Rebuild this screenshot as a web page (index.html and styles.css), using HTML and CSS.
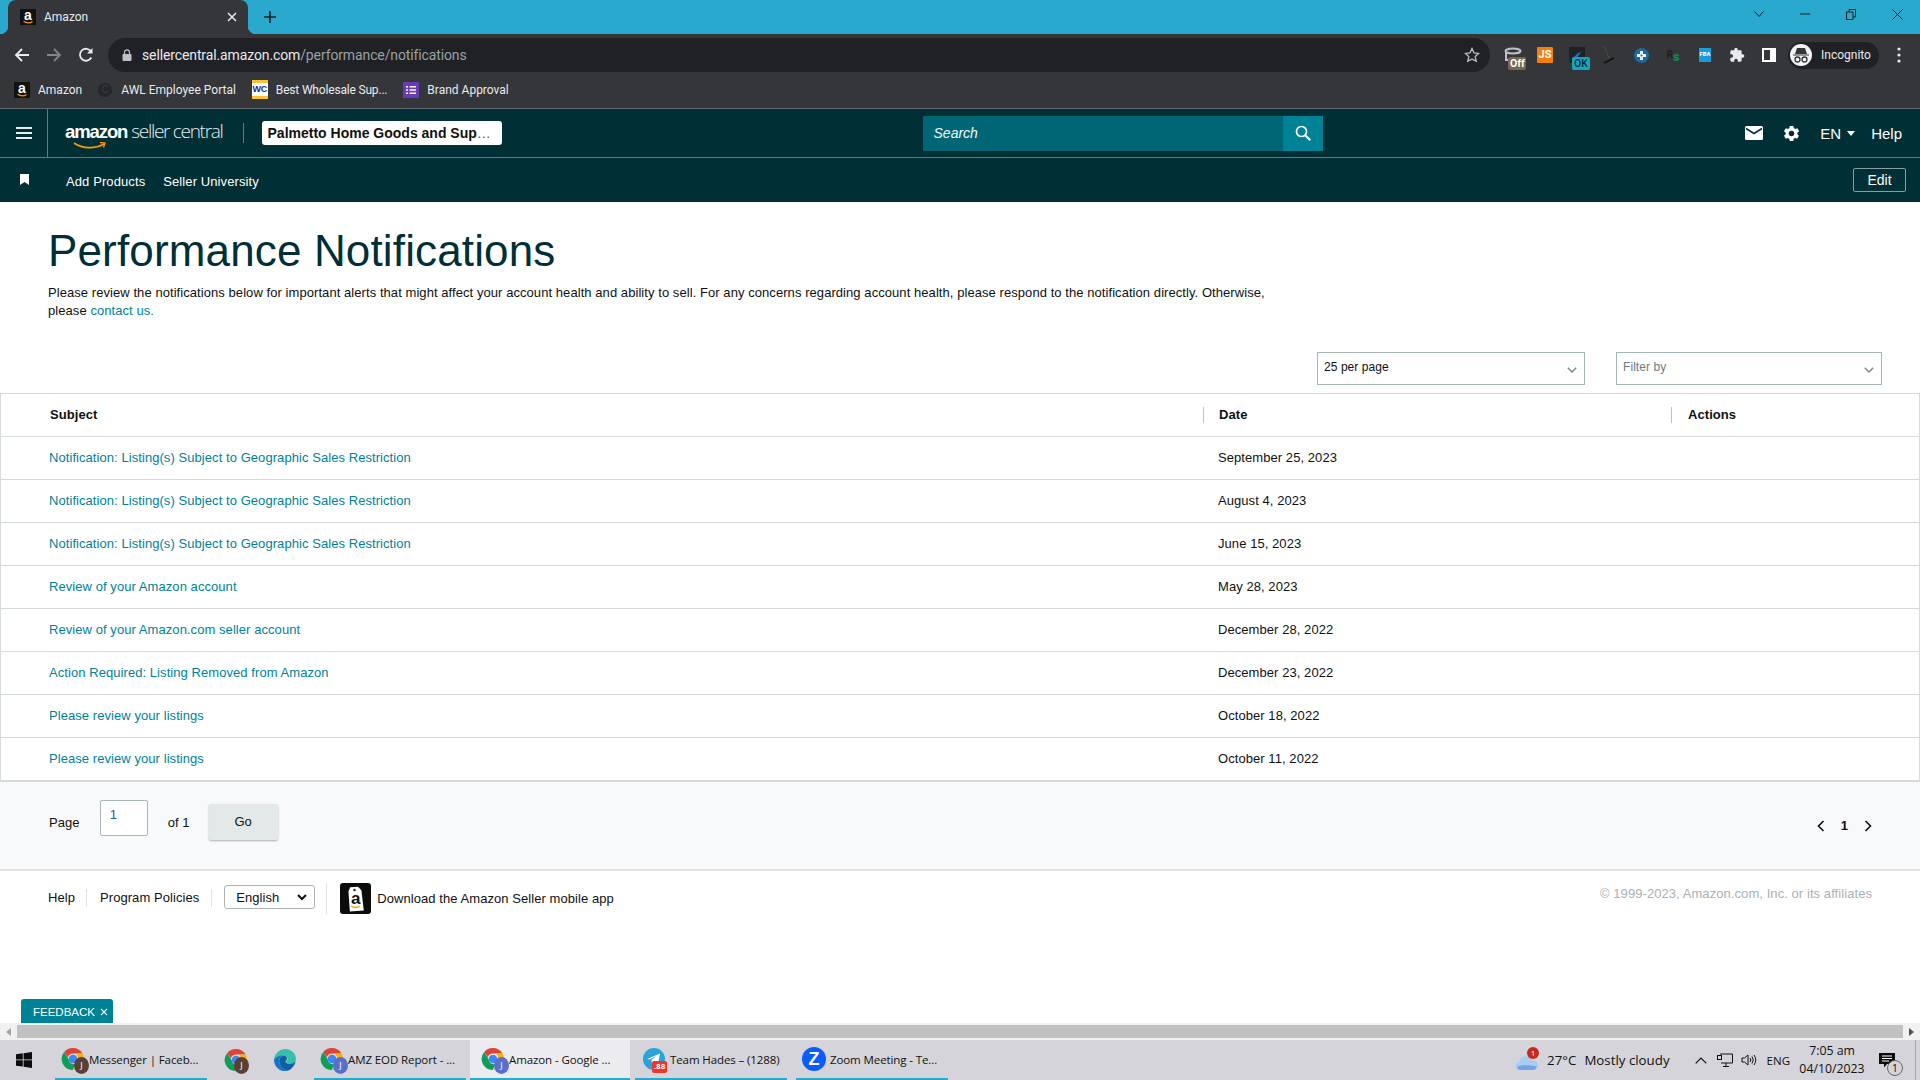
FILE: index.html
```html
<!DOCTYPE html>
<html lang="en">
<head>
<meta charset="utf-8">
<title>Amazon</title>
<link rel="stylesheet" href="styles.css">
</head>
<body>
<svg class="defs" width="0" height="0" aria-hidden="true">
  <symbol id="chrome" viewBox="0 0 24 24">
    <path fill="#db4437" d="M12 1a11 11 0 0 1 9.500 5.500H12a5.500 5.500 0 0 0-5.200 3.700L3.200 5A11 11 0 0 1 12 1z"/>
    <path fill="#f4b400" d="M21.500 6.500A11 11 0 0 1 12.700 23l4-6.700A5.500 5.500 0 0 0 16.400 8.700 5.500 5.500 0 0 0 15 6.500z"/>
    <path fill="#0f9d58" d="M3.200 5l4.500 7.500a5.500 5.500 0 0 0 6.300 4.700L11.800 23A11 11 0 0 1 3.200 5z"/>
    <circle cx="12" cy="12" r="4.300" fill="#4285f4"/>
  </symbol>
  <symbol id="azfav" viewBox="0 0 16 16">
    <rect width="16" height="16" fill="#111"/>
    <path d="M3.500 12.300c3 1.900 6.500 1.900 9 .2" fill="none" stroke="#f90" stroke-width="1.300"/>
  </symbol>
</svg>

<div class="screen">
  <header class="browser">
    <div class="titlebar">
      <div class="tab">
        <span class="fav"><svg width="16" height="16"><use href="#azfav"/></svg><b>a</b></span>
        <span class="tab-name">Amazon</span>
        <svg class="tab-x" width="10" height="10" viewBox="0 0 10 10"><path d="M1 1l8 8M9 1l-8 8" stroke="#e8eaed" stroke-width="1.500"/></svg>
      </div>
      <svg class="tab-new" width="12" height="12" viewBox="0 0 12 12"><path d="M6 0v12M0 6h12" stroke="#202124" stroke-width="1.600"/></svg>
      <div class="winctl">
        <span class="wc"><svg width="10" height="6" viewBox="0 0 10 6"><path d="M.5.500L5 5.500 9.500.500" fill="none" stroke="#202124"/></svg></span>
        <span class="wc"><svg width="10" height="2" viewBox="0 0 10 2"><path d="M0 1h10" stroke="#202124"/></svg></span>
        <span class="wc"><svg width="10" height="11" viewBox="0 0 10 11"><path d="M.5 3h6.500v7.500H.5zM3 3V.5h6.500V8H7" fill="none" stroke="#202124"/></svg></span>
        <span class="wc"><svg width="11" height="11" viewBox="0 0 11 11"><path d="M.5.500l10 10M10.500.500l-10 10" stroke="#202124"/></svg></span>
      </div>
    </div>
    <div class="toolbar">
      <span class="nav-ic"><svg width="16" height="16" viewBox="0 0 16 16"><path d="M15 8H2M8 2L2 8l6 6" fill="none" stroke="#e8eaed" stroke-width="1.800"/></svg></span>
      <span class="nav-ic"><svg width="16" height="16" viewBox="0 0 16 16"><path d="M1 8h13M8 2l6 6-6 6" fill="none" stroke="#80868b" stroke-width="1.800"/></svg></span>
      <span class="nav-ic"><svg width="16" height="16" viewBox="0 0 16 16"><path d="M13.300 10.500A6 6 0 1 1 13 4.500" fill="none" stroke="#e8eaed" stroke-width="1.800"/><path d="M14.500 1v5.500H9z" fill="#e8eaed"/></svg></span>
      <div class="omni">
        <svg class="lock" width="10" height="12" viewBox="0 0 10 12"><path d="M2.500 5V3.300a2.500 2.500 0 0 1 5 0V5" fill="none" stroke="#bdc1c6" stroke-width="1.200"/><rect y="5" width="9" height="7" x=".5" rx="1" fill="#bdc1c6"/></svg>
        <span class="url"><span class="url-host">sellercentral.amazon.com</span>/performance/notifications</span>
        <svg class="star" width="16" height="16" viewBox="0 0 16 16"><path d="M8 1.500l2 4.400 4.700.5-3.500 3.200 1 4.700L8 11.900l-4.200 2.400 1-4.700L1.300 6.400 6 5.900z" fill="none" stroke="#bdc1c6" stroke-width="1.300"/></svg>
      </div>
      <div class="exts">
        <span class="ext"><svg width="18" height="16" viewBox="0 0 18 16"><ellipse cx="9" cy="4" rx="7.500" ry="2.500" fill="none" stroke="#bdc1c6" stroke-width="2"/><path d="M2 5v8h6" fill="none" stroke="#bdc1c6" stroke-width="2"/></svg><i class="badge badge-off">Off</i></span>
        <span class="ext"><b class="ext-js">JS</b></span>
        <span class="ext"><span class="ext-dark"><svg width="16" height="10" viewBox="0 0 16 10"><path d="M3 9l6-6 3-1-4 6z" fill="#1a73c8"/></svg></span><i class="badge badge-ok">OK</i></span>
        <span class="ext"><svg width="12" height="20" viewBox="0 0 12 20"><path d="M1 1l5 12" stroke="#4a4b4f"/><path d="M1 18l10-5" stroke="#111" stroke-width="1.500"/></svg></span>
        <span class="ext"><svg width="15" height="15" viewBox="0 0 15 15"><circle cx="7.500" cy="7.500" r="7.500" fill="#1f6a9c"/><path d="M6 3h3v3h3v3H9v3H6V9H3V6h3z" fill="#e6f2fa"/><circle cx="7.500" cy="7.500" r="1" fill="#1f6a9c"/></svg></span>
        <span class="ext ext-rs"><b>R</b><b class="rs-s">s</b></span>
        <span class="ext"><b class="ext-fba">FBA</b></span>
        <span class="ext"><svg width="16" height="16" viewBox="0 0 24 24"><path fill="#e8eaed" d="M20.500 11H19V7a2 2 0 0 0-2-2h-4V3.500a2.500 2.500 0 0 0-5 0V5H4a2 2 0 0 0-2 2v3.800h1.500a2.700 2.700 0 0 1 0 5.400H2V20a2 2 0 0 0 2 2h3.800v-1.500a2.700 2.700 0 0 1 5.400 0V22H17a2 2 0 0 0 2-2v-4h1.500a2.500 2.500 0 0 0 0-5z"/></svg></span>
        <span class="ext"><span class="ext-panel"></span></span>
      </div>
      <div class="incog">
        <span class="incog-face"><svg width="18" height="18" viewBox="0 0 18 18"><path d="M3 8l2-6h8l2 6zM1 8.500h16v1H1z" fill="#35363a"/><circle cx="5.500" cy="13.500" r="2.500" fill="none" stroke="#35363a" stroke-width="1.300"/><circle cx="12.500" cy="13.500" r="2.500" fill="none" stroke="#35363a" stroke-width="1.300"/></svg></span>
        <span>Incognito</span>
      </div>
      <svg class="kebab" width="4" height="16" viewBox="0 0 4 16"><circle cx="2" cy="2" r="1.600" fill="#e8eaed"/><circle cx="2" cy="8" r="1.600" fill="#e8eaed"/><circle cx="2" cy="14" r="1.600" fill="#e8eaed"/></svg>
    </div>
    <div class="bookmarks">
      <span class="bm bm-1"><span class="fav"><svg width="16" height="16"><use href="#azfav"/></svg><b>a</b></span>Amazon</span>
      <span class="bm bm-2"><span class="bm-dot">C</span>AWL Employee Portal</span>
      <span class="bm bm-3"><span class="bm-wc">WC</span>Best Wholesale Sup...</span>
      <span class="bm bm-4"><svg width="16" height="16" viewBox="0 0 16 16"><rect width="16" height="16" fill="#673ab7"/><path d="M3 4h2v1.500H3zM6.500 4H13v1.500H6.500zM3 7.300h2v1.500H3zM6.500 7.300H13v1.500H6.500zM3 10.500h2V12H3zM6.500 10.500H13V12H6.500z" fill="#fff"/></svg>Brand Approval</span>
    </div>
  </header>

  <nav class="sc-top">
    <div class="burger-cell"><svg width="16" height="12" viewBox="0 0 16 12"><path d="M0 1h16M0 6h16M0 11h16" stroke="#e6ecec" stroke-width="1.800"/></svg></div>
    <div class="logo">
      <span class="logo-az">amazon<svg class="smile" width="34" height="8" viewBox="0 0 34 8"><path d="M1 1c9 6 21 6 30 1" fill="none" stroke="#f90" stroke-width="1.700"/><path d="M27 .5l5 .5-1.500 4.500" fill="none" stroke="#f90" stroke-width="1.300"/></svg></span>
      <span class="logo-sc">seller central</span>
    </div>
    <span class="logo-sep"></span>
    <button class="store">Palmetto Home Goods and Sup<span class="store-more">…</span></button>
    <div class="search">
      <span class="search-input">Search</span>
      <span class="search-btn"><svg width="16" height="16" viewBox="0 0 16 16"><circle cx="6.500" cy="6.500" r="5" fill="none" stroke="#fff" stroke-width="1.700"/><path d="M10.200 10.200L15.300 15.300" stroke="#fff" stroke-width="2"/></svg></span>
    </div>
    <div class="top-right">
      <svg class="ic-mail" width="18" height="14" viewBox="0 0 18 14"><rect width="18" height="14" rx="1.500" fill="#fff"/><path d="M1 2.500l8 5 8-5" fill="none" stroke="#002f36" stroke-width="1.500"/></svg>
      <svg class="ic-gear" width="19" height="19" viewBox="0 0 24 24"><path fill="#fff" fill-rule="evenodd" d="M19.400 13a7.500 7.500 0 0 0 0-2l2.300-1.700-2.300-4-2.600 1.100a7.500 7.500 0 0 0-1.800-1L14.300 2.500H9.700L9.300 5.400a7.500 7.500 0 0 0-1.800 1L4.800 5.300l-2.300 4L4.700 11a7.500 7.500 0 0 0 0 2l-2.200 1.700 2.300 4 2.700-1.100a7.500 7.500 0 0 0 1.800 1l.4 2.900h4.600l.4-2.900a7.500 7.500 0 0 0 1.800-1l2.600 1.100 2.300-4zM12 15.500a3.500 3.500 0 1 1 0-7 3.500 3.500 0 0 1 0 7z"/></svg>
      <span class="lang">EN<i class="caret"></i></span>
      <span class="top-help">Help</span>
    </div>
  </nav>
  <nav class="sc-sub">
    <svg class="ic-bm" width="9" height="11" viewBox="0 0 9 11"><path d="M0 0h9v11L4.500 8 0 11z" fill="#fff"/></svg>
    <span class="sub-link">Add Products</span>
    <span class="sub-link">Seller University</span>
    <button class="edit">Edit</button>
  </nav>

  <main class="page">
    <section class="intro">
      <h1>Performance Notifications</h1>
      <p><span>Please review the notifications below for important alerts that might affect your account health and ability to sell. For any concerns regarding account health, please respond to the notification directly. Otherwise,</span> <span>please</span> <a href="#">contact us.</a></p>
    </section>
    <div class="controls">
      <div class="dd"><span>25 per page</span><svg width="10" height="6" viewBox="0 0 10 6"><path d="M.8.800L5 5 9.200.800" fill="none" stroke="#7d8b8f" stroke-width="1.500"/></svg></div>
      <div class="dd dd-filter"><span>Filter by</span><svg width="10" height="6" viewBox="0 0 10 6"><path d="M.8.800L5 5 9.200.800" fill="none" stroke="#7d8b8f" stroke-width="1.500"/></svg></div>
    </div>
    <div class="table">
      <div class="row head">
        <div class="cell subj"><span class="th-plain">Subject</span></div>
        <div class="cell date"><span class="th-sep">Date</span></div>
        <div class="cell act"><span class="th-sep">Actions</span></div>
      </div>
      <div class="row"><div class="cell subj"><a href="#">Notification: Listing(s) Subject to Geographic Sales Restriction</a></div><div class="cell date">September 25, 2023</div><div class="cell act"></div></div>
      <div class="row"><div class="cell subj"><a href="#">Notification: Listing(s) Subject to Geographic Sales Restriction</a></div><div class="cell date">August 4, 2023</div><div class="cell act"></div></div>
      <div class="row"><div class="cell subj"><a href="#">Notification: Listing(s) Subject to Geographic Sales Restriction</a></div><div class="cell date">June 15, 2023</div><div class="cell act"></div></div>
      <div class="row"><div class="cell subj"><a href="#">Review of your Amazon account</a></div><div class="cell date">May 28, 2023</div><div class="cell act"></div></div>
      <div class="row"><div class="cell subj"><a href="#">Review of your Amazon.com seller account</a></div><div class="cell date">December 28, 2022</div><div class="cell act"></div></div>
      <div class="row"><div class="cell subj"><a href="#">Action Required: Listing Removed from Amazon</a></div><div class="cell date">December 23, 2022</div><div class="cell act"></div></div>
      <div class="row"><div class="cell subj"><a href="#">Please review your listings</a></div><div class="cell date">October 18, 2022</div><div class="cell act"></div></div>
      <div class="row"><div class="cell subj"><a href="#">Please review your listings</a></div><div class="cell date">October 11, 2022</div><div class="cell act"></div></div>
    </div>
    <div class="pager">
      <span class="pg-label">Page</span>
      <span class="pg-input">1</span>
      <span class="pg-of">of 1</span>
      <button class="pg-go">Go</button>
      <div class="pg-nav">
        <svg width="8" height="12" viewBox="0 0 8 12"><path d="M6.500 1L1.500 6l5 5" fill="none" stroke="#0f1111" stroke-width="1.600"/></svg>
        <b>1</b>
        <svg width="8" height="12" viewBox="0 0 8 12"><path d="M1.500 1l5 5-5 5" fill="none" stroke="#0f1111" stroke-width="1.600"/></svg>
      </div>
    </div>
    <footer class="foot">
      <span class="f-link f-help">Help</span>
      <span class="f-link f-pol">Program Policies</span>
      <span class="f-select">English<svg width="10" height="7" viewBox="0 0 10 7"><path d="M1 1l4 4 4-4" fill="none" stroke="#111" stroke-width="2"/></svg></span>
      <span class="f-app">
        <span class="f-appicon">
          <svg width="31" height="31" viewBox="0 0 31 31"><rect width="31" height="31" rx="3" fill="#0b0b0b"/><path d="M11 4h8l3 4 1 20-14 0 0-20z" fill="#fff" transform="rotate(-4 15 16)"/><circle cx="14.500" cy="7" r="1.300" fill="#333"/><path d="M11 23c3 2 6 2 9 0" fill="none" stroke="#f90" stroke-width="1.300"/></svg>
          <b>a</b>
        </span>
        Download the Amazon Seller mobile app
      </span>
      <span class="f-copy">© 1999-2023, Amazon.com, Inc. or its affiliates</span>
    </footer>
    <div class="feedback">FEEDBACK<svg width="8" height="8" viewBox="0 0 8 8"><path d="M1 1l6 6M7 1L1 7" stroke="#e6f5f7" stroke-width="1.200"/></svg></div>
  </main>

  <div class="hscroll">
    <span class="hs-arrow"><svg width="5" height="8" viewBox="0 0 5 8"><path d="M5 0v8L0 4z" fill="#a3a3a3"/></svg></span>
    <span class="hs-thumb"></span>
    <span class="hs-arrow"><svg width="5" height="8" viewBox="0 0 5 8"><path d="M0 0v8l5-4z" fill="#505050"/></svg></span>
  </div>

  <div class="taskbar">
    <span class="start"><svg width="16" height="16" viewBox="0 0 16 16"><path d="M0 2.300l6.800-1v6.200H0zM7.600 1.200L16 0v7.500H7.600zM0 8.300h6.800v6.300L0 13.700zM7.600 8.300H16V16l-8.400-1.200z" fill="#0c0c0c"/></svg></span>
    <span class="tb tb-w1"><span class="tb-ic"><svg width="24" height="24"><use href="#chrome"/></svg><i class="av av-brown">J</i></span><span class="tb-t">Messenger | Faceb...</span></span>
    <span class="tb-solo"><svg width="24" height="24"><use href="#chrome"/></svg><i class="av av-brown av-solo">J</i></span>
    <span class="tb-solo tb-edge"><svg width="24" height="24" viewBox="0 0 24 24"><path d="M12 1c6.500 0 11 4.600 11 10 0 3-2.500 5-5.500 5-2.500 0-4.500-1-4.500-2.500 0-.5.300-1 .8-1.300.8-.6 1-1.200.6-2.200C13.500 8.300 12 7.500 10 7.500 5.500 7.500 1.500 10.500 1 12 1.500 6 6 1 12 1z" fill="#36c0a8"/><path d="M1 12c.5-2 4-4.500 8.500-4.500C6.500 9 5.500 12 6.500 15.500c1 3.300 4 6.500 8 7.300C7.500 24.500 1 19 1 12z" fill="#1a73c4"/><path d="M6.500 15.500C5.500 12 6.500 9 9.500 7.500c2.500 0 4 .8 4.400 2.500.4 1-.1 1.600-.6 2.200-.5.300-.8.800-.8 1.300 0 1.500 2 2.500 4.500 2.500 2 0 4-1 5.500-2.500-1 4.500-4 8-8 9.300-4-.8-7-4-8-7.300z" fill="#0f5ea8"/></svg></span>
    <span class="tb tb-w2"><span class="tb-ic"><svg width="24" height="24"><use href="#chrome"/></svg><i class="av av-blue">J</i></span><span class="tb-t">AMZ EOD Report - ...</span></span>
    <span class="tb tb-w3 tb-active"><span class="tb-ic"><svg width="24" height="24"><use href="#chrome"/></svg><i class="av av-blue">J</i></span><span class="tb-t">Amazon - Google ...</span></span>
    <span class="tb tb-w4"><span class="tb-ic"><svg width="24" height="24" viewBox="0 0 24 24"><circle cx="12" cy="12" r="11" fill="#2aa3dc"/><path d="M5 12l13-5.500-2 11-4-3-2 2-.5-3.500 5-4.500-6.500 4z" fill="#fff"/></svg><i class="tg-badge">.88</i></span><span class="tb-t">Team Hades – (1288)</span></span>
    <span class="tb tb-w5"><span class="tb-ic"><svg width="24" height="24" viewBox="0 0 24 24"><circle cx="12" cy="12" r="12" fill="#0b5cff"/></svg><b class="zoom-z">Z</b></span><span class="tb-t">Zoom Meeting - Te...</span></span>
    <div class="tray">
      <span class="weather"><svg width="24" height="16" viewBox="0 0 26 18"><path d="M5 17a4.500 4.500 0 0 1-.5-9A7 7 0 0 1 18 6a5.500 5.500 0 0 1 3 11z" fill="#a9cdf2"/><path d="M2 13c6-2 14-2 22 0-1 2.500-2 4-4 4H5c-2 0-2.500-2-3-4z" fill="#6fa6e0"/></svg><i class="w-badge">1</i></span>
      <span class="temp">27°C</span>
      <span class="cond">Mostly cloudy</span>
      <svg class="tr-up" width="12" height="7" viewBox="0 0 12 7"><path d="M.7 6.300L6 1l5.300 5.300" fill="none" stroke="#111" stroke-width="1.200"/></svg>
      <svg class="tr-net" width="16" height="14" viewBox="0 0 16 14"><path d="M3 1h12.500v9H4M9 10v3M6 13.500h6" fill="none" stroke="#111"/><rect x=".5" y="2.500" width="4" height="4" fill="none" stroke="#111"/></svg>
      <svg class="tr-vol" width="16" height="14" viewBox="0 0 16 14"><path d="M1 5v4h2.500L7 12V2L3.500 5z" fill="none" stroke="#111"/><path d="M9 5a3 3 0 0 1 0 4M11 3.500a6 6 0 0 1 0 7M13 2a8.500 8.500 0 0 1 0 10" fill="none" stroke="#111"/></svg>
      <span class="tr-lang">ENG</span>
      <span class="clock"><span>7:05 am</span><span>04/10/2023</span></span>
      <span class="notif"><svg width="16" height="15" viewBox="0 0 16 15"><path d="M0 0h16v11H8l-3 3.500V11H0z" fill="#0c0c0c"/><path d="M3 3h10M3 5.500h10M3 8h7" stroke="#fff"/></svg><i class="n-badge">1</i></span>
    </div>
  </div>
</div>
</body>
</html>
```
FILE: styles.css
```css
* { box-sizing: border-box; }
html, body { margin: 0; padding: 0; height: 100%; overflow: hidden; }
body { font-family: "Liberation Sans", Arial, sans-serif; font-size: 13px; color: #0f1111; background: #fff; }
button { font: inherit; }
.defs { display: block; height: 0; }
i { font-style: normal; }
a { color: #008296; text-decoration: none; }
.screen { width: 1920px; height: 1080px; display: flex; flex-direction: column; }

/* browser chrome */
.browser { font-family: Roboto, "Liberation Sans", sans-serif; color: #e8eaed; background: #35363a; flex: none; }
.titlebar { height: 34px; background: #29a9ce; display: flex; align-items: center; }
.tab { position: relative; width: 240px; height: 34px; margin-left: 8px; padding: 0 11px 0 12px; background: #35363a; border-radius: 8px 8px 0 0; display: flex; align-items: center; font-size: 12px; }
.tab::before, .tab::after { content: ""; position: absolute; bottom: 0; width: 8px; height: 8px; }
.tab::before { left: -8px; background: radial-gradient(circle at 0 0, transparent 8px, #35363a 8.500px); }
.tab::after { right: -8px; background: radial-gradient(circle at 100% 0, transparent 8px, #35363a 8.500px); }
.fav { position: relative; width: 16px; height: 16px; flex: none; display: block; }
.fav svg { display: block; }
.fav b { position: absolute; left: 0; right: 0; top: -2px; text-align: center; font: bold 14px/16px "Liberation Sans", sans-serif; color: #fff; }
.tab-name { margin-left: 8px; flex: 1; }
.tab-new { margin-left: 16px; }
.winctl { margin-left: auto; display: flex; align-self: stretch; height: 28px; }
.wc { width: 46px; display: flex; align-items: center; justify-content: center; }
.toolbar { height: 38px; display: flex; align-items: center; padding: 4px 0 0 6px; }
.nav-ic { width: 32px; display: flex; justify-content: center; }
.omni { width: 1382px; height: 34px; margin-left: 6px; padding: 0 10px 0 14px; border-radius: 17px; background: #202124; display: flex; align-items: center; }
.url { margin-left: 10px; flex: 1; font-size: 14px; letter-spacing: -.12px; color: #9aa0a6; }
.url-host { color: #e8eaed; }
.exts { display: flex; margin-left: 7px; }
.ext { position: relative; width: 32px; height: 24px; display: flex; align-items: center; justify-content: center; }
.badge { position: absolute; font: bold 10.500px/13px Roboto, sans-serif; padding: 0 2px; border-radius: 2px; color: #fff; }
.badge-off { right: 3px; top: 14px; background: #7a6650; width: 18px; height: 13px; text-align: center; }
.badge-ok { right: 3px; top: 14px; background: #17a5c5; width: 18px; height: 13px; text-align: center; color: #0d2a33; font-weight: 500; }
.ext-js { width: 16px; height: 16px; border-radius: 1px; background: #f37f0c; color: #fff; font: bold 11px/16px Roboto, sans-serif; text-align: center; }
.ext-dark { width: 16px; height: 16px; background: #202124; display: flex; align-items: center; justify-content: center; }
.ext-rs { font: bold 10px/12px Roboto, sans-serif; color: #202124; }
.rs-s { color: #0f8a4b; font-size: 13px; margin-top: 3px; }
.ext-fba { width: 12px; height: 14px; background: #1b9bd8; color: #fff; font: bold 6px/12px Roboto, sans-serif; text-align: center; }
.ext-panel { width: 14px; height: 14px; border: solid #fff; border-width: 2px 6px 2px 2px; background: #35363a; }
.incog { width: 91px; height: 27px; margin-left: 3px; border-radius: 14px; background: #202124; display: flex; align-items: center; font-size: 12px; }
.incog-face { width: 22px; height: 22px; margin: 0 9px 0 2px; border-radius: 50%; background: #f1f3f4; display: flex; align-items: center; justify-content: center; }
.kebab { margin-left: 18px; }
.bookmarks { height: 37px; padding: 0 0 1px 14px; border-bottom: 1px solid #62666b; display: flex; align-items: center; font-size: 12px; }
.bm { display: flex; align-items: center; gap: 8px; }
.bm-2, .bm-3, .bm-4 { margin-left: 16px; }
.bm-3 { letter-spacing: -.18px; }
.bm-dot { width: 14px; height: 14px; margin-right: 1px; border-radius: 50%; background: #23262b; color: #3a3f46; font: 10px/14px "Liberation Sans", sans-serif; text-align: center; }
.bm-wc { width: 16px; height: 19px; background: linear-gradient(#f7c531 0 3px, #fff 3px 16px, #f7c531 16px); color: #14298a; font: bold 9px/19px "Liberation Sans", sans-serif; text-align: center; }

/* seller central nav */
.sc-top { flex: none; height: 49px; background: #002f36; border-bottom: 1px solid #5f7b80; display: flex; align-items: center; color: #fff; }
.burger-cell { width: 48px; height: 48px; border-right: 1px solid #5f7b80; display: flex; align-items: center; justify-content: center; }
.logo { margin-left: 17px; display: flex; align-items: baseline; gap: 4px; margin-top: -4px; }
.logo-az { position: relative; font: bold 18.500px/24px "Liberation Sans", sans-serif; letter-spacing: -1.1px; }
.smile { position: absolute; left: 8px; bottom: -6px; }
.logo-sc { font: 300 19px/24px "Open Sans", sans-serif; letter-spacing: -1.3px; color: #e8eded; }
.logo-sep { width: 1px; height: 20px; margin-left: 20px; background: #5f7b80; }
.store { width: 240px; height: 24px; margin-left: 18px; padding: 0 0 0 6px; border: 0; border-radius: 3px; background: #fff; color: #0f1111; font-weight: bold; font-size: 14px; text-align: left; white-space: nowrap; }
.store-more { font-weight: 400; color: #555; }
.search { width: 400px; height: 35px; background: #006574; display: flex; margin-left: 421px; }
.search-input { flex: 1; padding-left: 11px; font-style: italic; font-size: 14px; line-height: 35px; color: #f2fbfc; }
.search-btn { width: 40px; background: #008296; display: flex; align-items: center; justify-content: center; }
.top-right { margin-left: auto; display: flex; align-items: center; padding-right: 18px; font-size: 15px; }
.ic-mail { margin-right: 1px; }
.ic-gear { margin-left: 18px; }
.lang { margin-left: 19px; display: flex; align-items: center; gap: 6px; }
.caret { width: 0; height: 0; border: 4px solid transparent; border-top: 5px solid #fff; border-bottom: 0; }
.top-help { margin-left: 16px; }
.sc-sub { flex: none; height: 44px; background: #002f36; display: flex; align-items: center; color: #fff; font-size: 13px; letter-spacing: .1px; }
.ic-bm { margin: -1px 0 0 20px; }
.sub-link { margin: 2px 0 0 18px; }
.sub-link:first-of-type { margin-left: 37px; }
.edit { margin-left: auto; margin-right: 14px; width: 53px; height: 24px; padding: 0; background: transparent; border: 1px solid #8a9da1; border-radius: 2px; color: #fff; font-size: 14px; }

/* page */
.page { position: relative; flex: 1; min-height: 0; display: flex; flex-direction: column; letter-spacing: .065px; }
.intro { padding: 24px 0 0 48px; }
h1 { margin: 0; font-weight: 400; font-size: 44px; line-height: 50px; letter-spacing: .15px; color: #002f36; }
.intro p { width: 1240px; margin: 8px 0 0; font-size: 13px; line-height: 18px; }
.controls { display: flex; justify-content: flex-end; gap: 31px; margin-top: 32px; padding-right: 38px; }
.dd { width: 268px; height: 33px; padding: 0 7px 3px 6px; border: 1px solid #a6b6b6; display: flex; align-items: center; justify-content: space-between; font-size: 12px; }
.dd svg { margin-top: 5px; }
.dd-filter { width: 266px; color: #6f7b7d; }
.table { margin-top: 8px; border: 1px solid #d5dbdb; border-width: 1px 1px 2px 1px; }
.row { display: grid; grid-template-columns: 1202px 468px 1fr; height: 43px; padding-bottom: 2px; border-top: 1px solid #d5dbdb; align-items: center; font-size: 13px; }
.row.head { height: 42px; padding-bottom: 0; border-top: 0; font-weight: bold; }
.cell.subj { padding-left: 48px; }
.cell.date { padding-left: 15px; }
.head .subj { padding-left: 49px; }
.head .date, .head .act { padding-left: 0; }
.th-plain { display: block; line-height: 16px; }
.th-sep { display: block; height: 16px; padding-left: 15px; line-height: 16px; border-left: 1px solid #b9c4c4; }
.head .act .th-sep { padding-left: 16px; }
.pager { height: 89px; padding-left: 49px; background: #f8f9fa; border-bottom: 2px solid #e0e2e3; display: flex; align-items: center; font-size: 13px; }
.pg-label { margin-top: -7px; }
.pg-input { width: 48px; height: 36px; margin: -15px 0 0 20px; padding: 5px 0 0 9px; background: #fff; border: 1px solid #a6b6b6; border-radius: 2px; line-height: 18px; color: #0f6a7a; }
.pg-of { margin: -7px 0 0 20px; }
.pg-go { width: 69px; height: 36px; margin: -8px 0 0 19px; padding: 0; background: #e3e9e9; border: 0; border-radius: 2px; box-shadow: 0 1px 2px rgba(0,0,0,.3); color: #0f1111; font-size: 13px; }
.pg-nav { margin-left: auto; margin-right: 48px; display: flex; align-items: center; gap: 16px; font-size: 13px; }
.pg-nav b { font-weight: bold; }
.foot { flex: 1; padding: 0 48px 0 48px; display: flex; align-items: flex-start; font-size: 13px; }
.f-link { margin-top: 18px; line-height: 18px; padding-right: 12px; border-right: 1px solid #e0e2e3; height: 18px; }
.f-help { padding-right: 11px; }
.f-pol { margin-left: 13px; }
.f-select { width: 91px; height: 24px; margin: 14px 0 0 12px; padding: 0 7px 0 11px; background: #fff; border: 1px solid #aeb4b4; border-radius: 3px; display: flex; align-items: center; justify-content: space-between; }
.f-app { margin: 12px 0 0 11px; padding-left: 13px; display: flex; align-items: center; gap: 6px; border-left: 1px solid #e0e2e3; height: 31px; }
.f-appicon { position: relative; width: 31px; height: 31px; display: block; }
.f-appicon svg { display: block; }
.f-appicon b { position: absolute; left: 0; right: 0; top: 6px; text-align: center; font: bold 17px/20px "Liberation Sans", sans-serif; color: #111; }
.f-copy { margin: 15px 0 0 auto; font-size: 13px; letter-spacing: .07px; color: #aab0b1; }
.feedback { position: absolute; left: 21px; bottom: 0; width: 92px; height: 24px; padding: 1px 0 0 12px; border-radius: 3px 3px 0 0; background: #008296; color: #fff; display: flex; align-items: center; gap: 5px; font-size: 11.500px; letter-spacing: 0; }

/* scrollbar */
.hscroll { flex: none; height: 17px; padding: 2px 0; background: #f1f1f1; display: flex; align-items: center; }
.hs-arrow { width: 17px; display: flex; justify-content: center; }
.hs-thumb { flex: 1; height: 13px; background: #c1c1c1; }

/* taskbar */
.taskbar { flex: none; height: 40px; background: #d5d4da; display: flex; font-family: "Open Sans", sans-serif; font-size: 11.500px; color: #111; }
.start { width: 48px; display: flex; align-items: center; justify-content: center; }
.tb, .tb-solo { position: relative; display: flex; align-items: center; }
.tb { padding-left: 6px; border-bottom: 2px solid #29a9ce; margin-right: 4px; white-space: nowrap; }
.tb-t { margin-left: 4px; letter-spacing: -.1px; }
.tb-ic { position: relative; width: 24px; height: 24px; }
.tb-ic svg, .tb-solo svg { display: block; }
.tb-w1 { width: 152px; margin-left: 7px; margin-right: 17px; }
.tb-solo { width: 24px; justify-content: center; margin-right: 25px; }
.tb-edge { margin-right: 23px; }
.tb-w2 { width: 152px; margin-left: -6px; }
.tb-w3 { width: 160px; margin-right: 5px; padding-left: 11px; }
.tb-active { background: #ecebef; }
.tb-w4 { width: 152px; margin-right: 9px; padding-left: 7px; }
.tb-w5 { width: 152px; padding-left: 6px; }
.av { position: absolute; width: 15px; height: 17px; left: 13px; top: 10px; border-radius: 50%; color: #fff; font-size: 9px; line-height: 17px; text-align: center; }
.av-solo { left: 10px; top: 17px; }
.av-brown { background: #5a4034; }
.av-blue { background: #5a6fc8; }
.tg-badge { position: absolute; left: 10px; top: 14px; width: 15px; height: 12px; border-radius: 2px; background: #f0352f; color: #fff; font: bold 8px/12px Roboto, sans-serif; text-align: center; }
.zoom-z { position: absolute; left: 0; right: 0; top: 0; text-align: center; color: #fff; font: bold 18px/24px "Liberation Sans", sans-serif; }
.tray { margin-left: auto; display: flex; align-items: center; font-size: 13.300px; }
.weather { position: relative; width: 24px; height: 16px; margin-top: 6px; }
.weather svg { display: block; }
.w-badge { position: absolute; left: 12px; top: -8px; width: 12px; height: 12px; border-radius: 50%; background: #c42b1c; color: #fff; font-size: 8px; line-height: 12px; text-align: center; }
.temp { margin-left: 8px; }
.cond { margin-left: 8px; }
.tr-up { margin-left: 25px; }
.tr-net { margin-left: 10px; }
.tr-vol { margin-left: 8px; }
.tr-lang { margin-left: 10px; font-size: 11.500px; }
.clock { width: 68px; margin-left: 8px; display: flex; flex-direction: column; align-items: center; font-size: 12.300px; line-height: 18px; }
.notif { position: relative; width: 42px; margin-left: 8px; margin-right: 4px; border-right: 1px solid #a9a9ae; height: 40px; display: flex; align-items: center; padding-left: 5px; }
.n-badge { position: absolute; left: 13px; top: 20px; width: 16px; height: 16px; border-radius: 50%; border: 1px solid #666; font-size: 11px; line-height: 14px; text-align: center; background: #d5d4da; }
```
